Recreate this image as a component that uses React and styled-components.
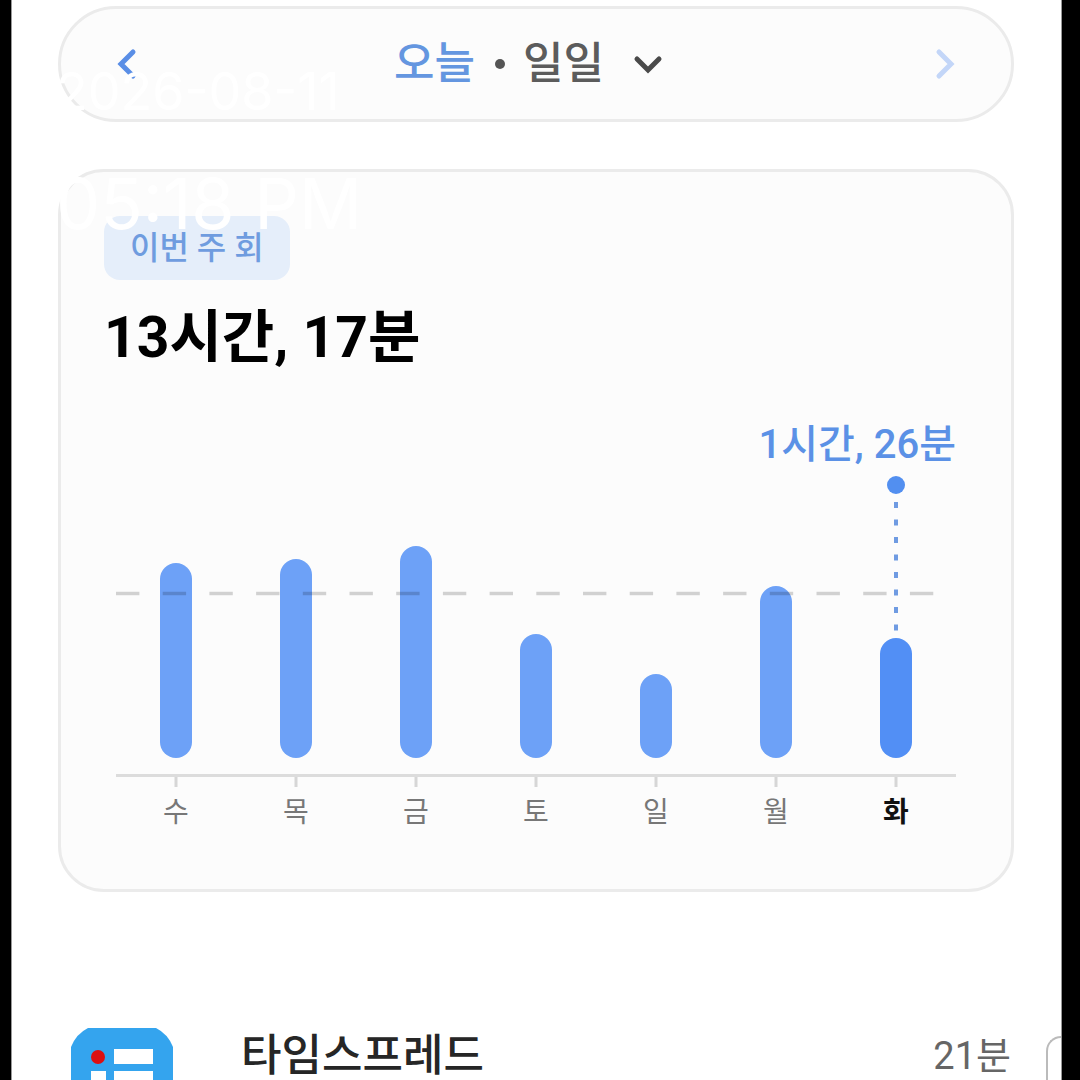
import React from 'react';
import styled, { createGlobalStyle } from 'styled-components';

const GlobalStyle = createGlobalStyle`
    * {
        box-sizing: border-box;
    }

    body {
        margin: 0;
        background-color: #000;
        font-family: Roboto, "Noto Sans CJK KR", sans-serif;
    }

    h1, p, time {
        margin: 0;
    }

    button {
        padding: 0;
        border: 0;
        background: none;
        font: inherit;
        color: inherit;
        cursor: pointer;
    }

    svg {
        display: block;
    }
`;

const Screen = styled.main`
    position: relative;
    height: 100vh;
    margin: 0 18px 0 11px;
    padding: 6px 47px 0 46px;
    border: solid #999;
    border-width: 0 1px;
    background-color: #fff;
    overflow: hidden;
`;

const Panel = styled.section`
    border: 3px solid #ebebeb;
    background-color: #fcfcfc;
`;

const PeriodNav = styled(Panel).attrs({ as: 'nav' })`
    display: flex;
    align-items: center;
    justify-content: space-between;
    padding: 27px 42px;
    border-radius: 58px;
`;

const ArrowButton = styled.button`
    color: #5a8ee6;

    &:disabled {
        color: #c3d6f8;
        cursor: default;
    }
`;

const PeriodButton = styled.button`
    display: flex;
    align-items: center;
    padding-right: 8px;
    font-size: 44px;
    line-height: 56px;
    color: #5c5c5c;
`;

const PeriodText = styled.span`
    font-weight: 500;
    color: ${props => (props.$today ? '#6496e0' : 'inherit')};
`;

const Dot = styled.span`
    width: 10px;
    height: 10px;
    margin: 0 18px 0 20px;
    border-radius: 50%;
    background-color: #555;
`;

const ChevronBox = styled.span`
    margin-left: 22px;
    color: #4a4a4a;
`;

const UsageCard = styled(Panel)`
    margin-top: 47px;
    padding: 44px 43px 59px;
    border-radius: 46px;
`;

const Badge = styled.p`
    width: fit-content;
    padding: 0 26px;
    border-radius: 16px;
    background-color: #e5eefa;
    font-size: 32px;
    font-weight: 500;
    line-height: 64px;
    color: #6f9cdf;
`;

const Total = styled.h1`
    margin-top: 18px;
    font-size: 57px;
    font-weight: 700;
    line-height: 80px;
    color: #000;
`;

const Chart = styled.svg`
    width: 100%;
    margin-top: 42px;
    padding: 0 12px;
`;

const DayLabel = styled.text`
    font-size: 28px;
    font-weight: ${props => (props.$active ? 700 : 400)};
    fill: ${props => (props.$active ? '#111' : '#777')};
    text-anchor: middle;
`;

const Callout = styled.text`
    font-size: 40px;
    font-weight: 500;
    fill: #5b91e6;
    text-anchor: end;
`;

const AppRow = styled.section`
    display: flex;
    align-items: flex-start;
    margin: 136px -47px 0 0;
    padding-left: 13px;
`;

const AppName = styled.p`
    flex: 1;
    margin: 4px 0 0 68px;
    font-size: 44px;
    font-weight: 500;
    line-height: 48px;
    color: #262626;
`;

const AppTime = styled.p`
    margin: 4px 35px 0 0;
    font-size: 38px;
    line-height: 48px;
    color: #666;
`;

const SideButton = styled.button`
    width: 15px;
    height: 88px;
    margin-top: 8px;
    border: 2px solid #bbb;
    border-right: 0;
    border-radius: 18px 0 0 18px;
`;

const Stamp = styled.time`
    position: absolute;
    top: 60px;
    left: 44px;
    display: flex;
    flex-direction: column;
    gap: 40px;
    font-family: Inter, sans-serif;
    color: #fff;
    pointer-events: none;
`;

const StampDate = styled.span`
    font-size: 52px;
    line-height: 64px;
`;

const StampTime = styled.span`
    font-size: 70px;
    line-height: 80px;
`;

const BAR_BOTTOM = 338;

const days = [
    { label: '수', height: 195 },
    { label: '목', height: 199 },
    { label: '금', height: 212 },
    { label: '토', height: 124 },
    { label: '일', height: 84 },
    { label: '월', height: 172 },
    { label: '화', height: 120, active: true },
];

const Chevron = ({ path }) => (
    <svg width="44" height="44" viewBox="0 0 44 44" fill="none" aria-hidden="true">
        <path d={path} stroke="currentColor" strokeWidth="5" strokeLinecap="round" />
    </svg>
);

const UsageChart = () => (
    <Chart viewBox="0 0 840 410" role="img" aria-label="주간 사용 시간">
        {days.map((day, index) => {
            const x = 60 + index * 120;
            return (
                <g key={day.label}>
                    <rect
                        x={x - 16}
                        y={BAR_BOTTOM - day.height}
                        width="32"
                        height={day.height}
                        rx="16"
                        fill={day.active ? '#528ff5' : '#6da1f7'}
                    />
                    <path d={`M${x} 356V367`} stroke="#d6d6d6" strokeWidth="3" />
                    <DayLabel x={x} y="402" $active={day.active}>{day.label}</DayLabel>
                </g>
            );
        })}
        <path d="M0 355.5H840" stroke="#dcdcdc" strokeWidth="3" />
        <path d="M0 173.5H840" stroke="#000" strokeOpacity="0.17" strokeWidth="3.5" strokeDasharray="23.4 23.3" />
        <path d="M780 82V214" stroke="#6f9be2" strokeWidth="4" strokeDasharray="6 11.5" />
        <circle cx="780" cy="65" r="9" fill="#528ff0" />
        <Callout x="840" y="38">1시간, 26분</Callout>
    </Chart>
);

const AppLogo = () => (
    <svg width="102" height="102" viewBox="0 0 102 102" aria-hidden="true">
        <path d="M17 0H85Q97 6 102 19V83Q97 96 85 102H17Q5 96 0 83V19Q5 6 17 0Z" fill="#34a4ee" />
        <circle cx="27" cy="29" r="7" fill="#dd0f12" />
        <path d="M43 21H82V36H43ZM43 43H82V58H43ZM20 43H35V58H20ZM43 65H82V80H43ZM20 65H35V80H20Z" fill="#fff" />
    </svg>
);

const App = () => {
    return (
        <>
            <GlobalStyle />
            <Screen>
                <PeriodNav aria-label="기간">
                    <ArrowButton type="button" aria-label="이전">
                        <Chevron path="M30 10L18 22L30 34" />
                    </ArrowButton>
                    <PeriodButton type="button" aria-haspopup="menu">
                        <PeriodText $today>오늘</PeriodText>
                        <Dot />
                        <PeriodText>일일</PeriodText>
                        <ChevronBox>
                            <Chevron path="M11 17L22 28L33 17" />
                        </ChevronBox>
                    </PeriodButton>
                    <ArrowButton type="button" aria-label="다음" disabled>
                        <Chevron path="M14 10L26 22L14 34" />
                    </ArrowButton>
                </PeriodNav>

                <UsageCard>
                    <Badge>이번 주 회</Badge>
                    <Total>13시간, 17분</Total>
                    <UsageChart />
                </UsageCard>

                <AppRow>
                    <AppLogo />
                    <AppName>타임스프레드</AppName>
                    <AppTime>21분</AppTime>
                    <SideButton type="button" aria-label="더보기" />
                </AppRow>

                <Stamp>
                    <StampDate>2026-08-11</StampDate>
                    <StampTime>05:18 PM</StampTime>
                </Stamp>
            </Screen>
        </>
    );
};

export default App;
